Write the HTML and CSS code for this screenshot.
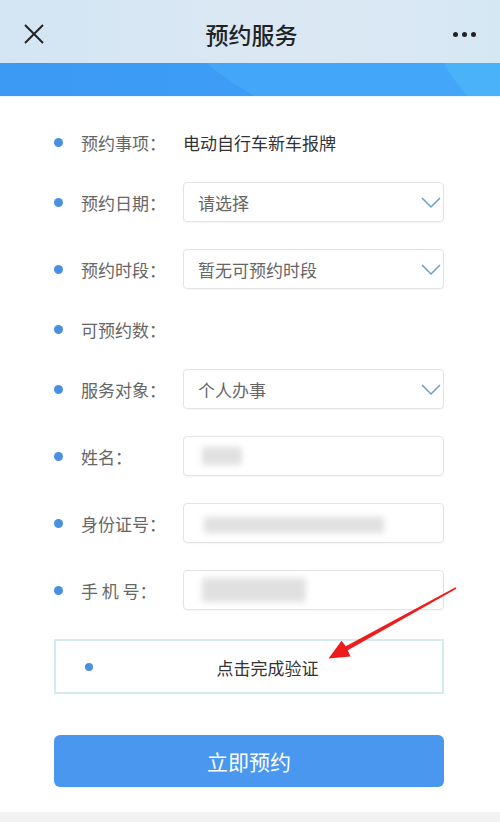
FILE: index.html
```html
<!DOCTYPE html>
<html lang="zh-CN">
<head>
    <meta charset="UTF-8">
    <meta name="viewport" content="width=device-width, initial-scale=1.0">
    <title>预约服务</title>
    <link rel="stylesheet" href="styles.css">
</head>
<body>
    <div class="page">
        <header class="topbar">
            <span class="close">
                <svg width="20" height="20" viewBox="0 0 20 20"><path d="M1 1L19 19M19 1L1 19" stroke="#222" stroke-width="2" fill="none"/></svg>
            </span>
            <h1 class="title">预约服务</h1>
            <span class="more"><i></i><i></i><i></i></span>
        </header>
        <div class="banner"></div>

        <main class="form">
            <div class="row">
                <span class="dot"></span>
                <span class="label">预约事项：</span>
                <span class="value">电动自行车新车报牌</span>
            </div>
            <div class="row">
                <span class="dot"></span>
                <span class="label">预约日期：</span>
                <div class="field select">
                    <span class="placeholder">请选择</span>
                    <svg class="chevron" width="20" height="12" viewBox="0 0 20 12"><path d="M1 1L10 10L19 1" stroke="#6c9fc6" stroke-width="1.5" fill="none"/></svg>
                </div>
            </div>
            <div class="row">
                <span class="dot"></span>
                <span class="label">预约时段：</span>
                <div class="field select">
                    <span class="placeholder">暂无可预约时段</span>
                    <svg class="chevron" width="20" height="12" viewBox="0 0 20 12"><path d="M1 1L10 10L19 1" stroke="#6c9fc6" stroke-width="1.5" fill="none"/></svg>
                </div>
            </div>
            <div class="row">
                <span class="dot"></span>
                <span class="label">可预约数：</span>
            </div>
            <div class="row">
                <span class="dot"></span>
                <span class="label">服务对象：</span>
                <div class="field select">
                    <span class="placeholder">个人办事</span>
                    <svg class="chevron" width="20" height="12" viewBox="0 0 20 12"><path d="M1 1L10 10L19 1" stroke="#6c9fc6" stroke-width="1.5" fill="none"/></svg>
                </div>
            </div>
            <div class="row">
                <span class="dot"></span>
                <span class="label">姓名：</span>
                <div class="field">
                    <span class="blur blur-name"></span>
                </div>
            </div>
            <div class="row">
                <span class="dot"></span>
                <span class="label">身份证号：</span>
                <div class="field">
                    <span class="blur blur-id"></span>
                </div>
            </div>
            <div class="row">
                <span class="dot"></span>
                <span class="label">手 机 号：</span>
                <div class="field">
                    <span class="blur blur-phone"></span>
                </div>
            </div>

            <div class="captcha">
                <span class="dot"></span>
                <span class="captcha-text">点击完成验证</span>
            </div>

            <button class="submit">立即预约</button>
        </main>

        <svg class="arrow" width="500" height="822" viewBox="0 0 500 822">
            <polygon points="455.6,587.3 345.8,646.2 341.5,640.8 328.5,658.5 350.5,656.6 347.8,650.2 456.4,588.7" fill="#ee1d1d"/>
        </svg>
    </div>
</body>
</html>
```

FILE: styles.css
```css
* {
    box-sizing: border-box;
    margin: 0;
    padding: 0;
}
body {
    font-family: "Noto Sans CJK SC", "Noto Sans", sans-serif;
    background-color: #f2f2f2;
    color: #333;
}
.page {
    position: relative;
    width: 500px;
}
.topbar {
    height: 63px;
    display: flex;
    align-items: center;
    justify-content: space-between;
    padding: 5px 24px 0 24px;
    background: linear-gradient(90deg, #d3e5f3 0%, #dbe8f3 55%, #d6e7f4 100%);
}
.close {
    width: 20px;
    height: 20px;
    display: flex;
}
.title {
    font-size: 23px;
    font-weight: 500;
    color: #222;
    margin-left: 6px;
}
.more {
    display: flex;
    gap: 4px;
}
.more i {
    width: 5px;
    height: 5px;
    border-radius: 50%;
    background: #222;
}
.banner {
    height: 34px;
    background:
        radial-gradient(circle at 560px -60px, #4ab2f8 0 130px, transparent 131px),
        radial-gradient(circle at 400px -230px, #44a6f8 0 300px, transparent 301px),
        linear-gradient(90deg, #3c9af4 0%, #3d9cf6 50%, #3a8ff0 100%);
    border-bottom: 1px solid #eaf4fb;
}
.form {
    background: #fff;
    padding: 32px 56px 25px 54px;
}
.row {
    display: flex;
    align-items: center;
    min-height: 26px;
    margin-bottom: 27px;
}
.row:last-of-type {
    margin-bottom: 0;
}
.dot {
    width: 9px;
    height: 9px;
    border-radius: 50%;
    background: #4a90e2;
    margin-right: 18px;
    flex-shrink: 0;
}
.label {
    width: 102px;
    font-size: 17px;
    color: #666;
    white-space: pre;
}
.value {
    font-size: 17px;
    color: #333;
}
.field {
    flex: 1;
    height: 40px;
    border: 1px solid #e3e3e3;
    border-radius: 4px;
    box-shadow: 0 1px 2px rgba(0,0,0,0.04);
    display: flex;
    align-items: center;
    padding-left: 14px;
    position: relative;
}
.placeholder {
    font-size: 17px;
    color: #666;
}
.chevron {
    position: absolute;
    right: 2px;
    top: 14px;
}
.blur {
    display: block;
    background: #d6d6d6;
    filter: blur(3px);
    opacity: 0.75;
}
.blur-name {
    width: 40px;
    height: 18px;
    margin-left: 4px;
}
.blur-id {
    width: 180px;
    height: 16px;
    margin-left: 6px;
    margin-top: 4px;
}
.blur-phone {
    width: 104px;
    height: 24px;
    margin-left: 4px;
}
.captcha {
    margin-top: 29px;
    height: 55px;
    border: 2px solid #d3eaee;
    display: flex;
    align-items: center;
    padding-left: 29px;
}
.captcha .dot {
    width: 8px;
    height: 8px;
    margin-right: 0;
}
.captcha-text {
    flex: 1;
    text-align: center;
    font-size: 17px;
    color: #333;
    margin-top: 2px;
}
.submit {
    display: block;
    width: 100%;
    height: 52px;
    margin-top: 41px;
    border: none;
    border-radius: 6px;
    background: #4a97f0;
    color: #fff;
    font-family: inherit;
    font-size: 21px;
}
.arrow {
    position: absolute;
    left: 0;
    top: 0;
    pointer-events: none;
}
```
